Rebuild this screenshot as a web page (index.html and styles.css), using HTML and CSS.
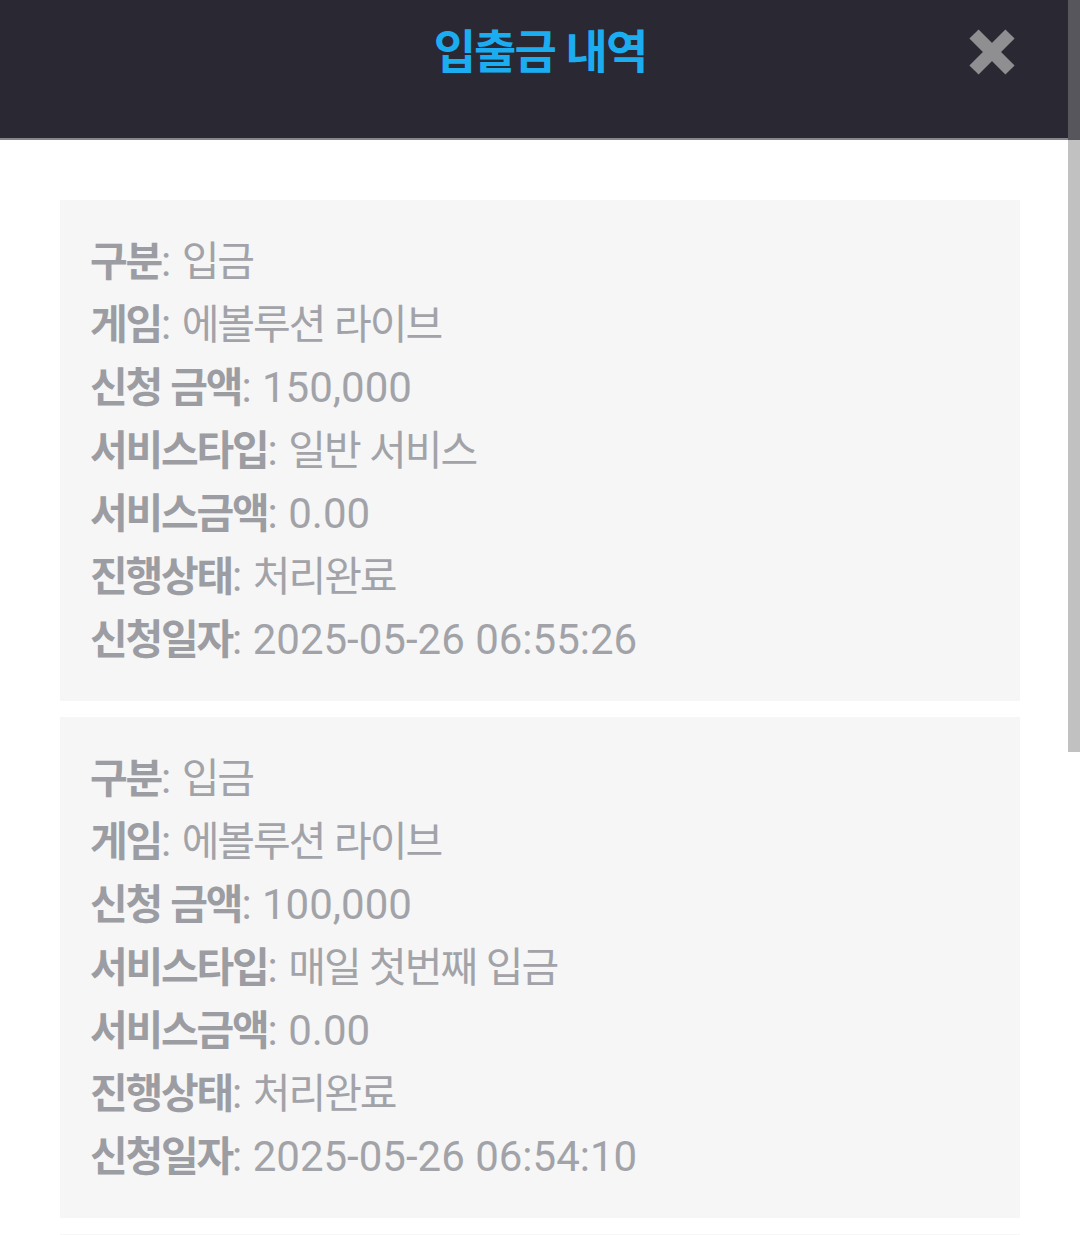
FILE: index.html
```html
<!DOCTYPE html>
<html lang="ko">
<head>
    <meta charset="UTF-8">
    <meta name="viewport" content="width=device-width, initial-scale=1.0">
    <title>입출금 내역</title>
    <link rel="stylesheet" href="styles.css">
</head>
<body>
    <div class="header">
        <h1 class="title">입출금 내역</h1>
        <button class="close" aria-label="닫기">
            <svg width="48" height="48" viewBox="0 0 48 48">
                <path d="M6 6 L42 42 M42 6 L6 42" stroke="#8f8f91" stroke-width="13" stroke-linecap="butt" fill="none"/>
            </svg>
        </button>
    </div>

    <div class="list">
        <div class="card">
            <div class="row"><span class="label">구분</span>: <span class="ko">입금</span></div>
            <div class="row"><span class="label">게임</span>: <span class="ko">에볼루션 라이브</span></div>
            <div class="row"><span class="label">신청 금액</span>: 150,000</div>
            <div class="row"><span class="label">서비스타입</span>: <span class="ko">일반 서비스</span></div>
            <div class="row"><span class="label">서비스금액</span>: 0.00</div>
            <div class="row"><span class="label">진행상태</span>: <span class="ko">처리완료</span></div>
            <div class="row"><span class="label">신청일자</span>: 2025-05-26 06:55:26</div>
        </div>

        <div class="card">
            <div class="row"><span class="label">구분</span>: <span class="ko">입금</span></div>
            <div class="row"><span class="label">게임</span>: <span class="ko">에볼루션 라이브</span></div>
            <div class="row"><span class="label">신청 금액</span>: 100,000</div>
            <div class="row"><span class="label">서비스타입</span>: <span class="ko">매일 첫번째 입금</span></div>
            <div class="row"><span class="label">서비스금액</span>: 0.00</div>
            <div class="row"><span class="label">진행상태</span>: <span class="ko">처리완료</span></div>
            <div class="row"><span class="label">신청일자</span>: 2025-05-26 06:54:10</div>
        </div>

        <div class="card"></div>
    </div>

    <div class="scrollbar">
        <div class="thumb-top"></div>
        <div class="thumb"></div>
    </div>
</body>
</html>
```

FILE: styles.css
```css
body {
    margin: 0;
    background-color: #fff;
    font-family: Roboto, "Noto Sans CJK KR", sans-serif;
    overflow: hidden;
}
.header {
    height: 138px;
    background-color: #2a2833;
    border-bottom: 2px solid #85858b;
    display: flex;
    justify-content: center;
    align-items: flex-start;
}
.title {
    margin: 16px 0 0;
    font-family: "Noto Sans CJK KR", sans-serif;
    font-size: 46px;
    font-weight: 700;
    letter-spacing: -2px;
    line-height: 64px;
    color: #1badf0;
}
.close {
    position: absolute;
    top: 28px;
    left: 968px;
    width: 48px;
    height: 48px;
    padding: 0;
    border: none;
    background: none;
}
.close svg {
    display: block;
}
.list {
    padding: 60px 60px 0;
    display: flex;
    flex-direction: column;
    gap: 16px;
}
.card {
    min-height: 441px;
    background-color: #f6f6f6;
    padding: 27px 30px 33px;
}
.row {
    height: 63px;
    font-size: 42px;
    line-height: 63px;
    color: #a2a3a8;
    white-space: nowrap;
}
.label {
    font-family: "Noto Sans CJK KR", sans-serif;
    font-weight: 700;
    font-size: 41px;
    letter-spacing: -2.2px;
    color: #9c9da2;
}
.ko {
    font-family: "Noto Sans CJK KR", sans-serif;
    font-size: 41px;
    letter-spacing: -2px;
}
.scrollbar {
    position: fixed;
    top: 0;
    right: 0;
    width: 12px;
}
.thumb-top {
    height: 140px;
    background-color: #57565d;
}
.thumb {
    height: 612px;
    background-color: #c1c1c1;
}
```
